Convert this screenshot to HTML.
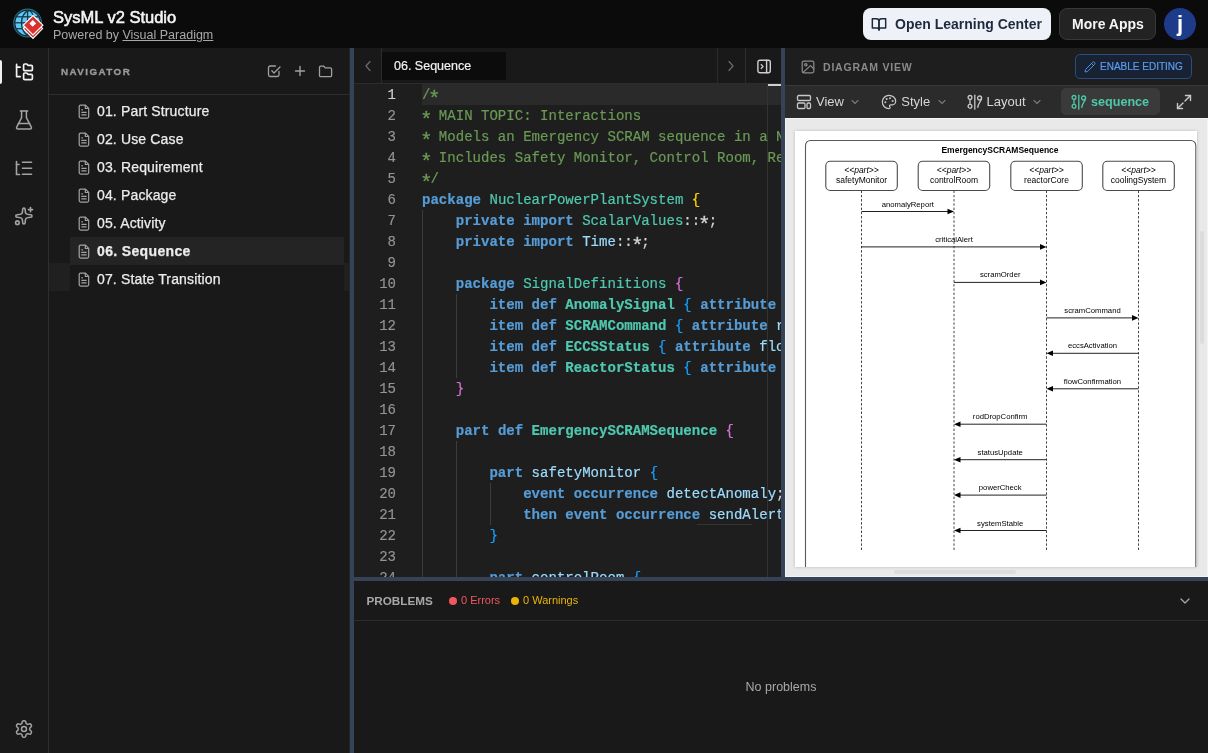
<!DOCTYPE html>
<html><head><meta charset="utf-8">
<style>
*{box-sizing:border-box;margin:0;padding:0}
html,body{width:1208px;height:753px;overflow:hidden;background:#1a1a1a;font-family:"Liberation Sans",sans-serif;color:#e5e5e5}
.abs{position:absolute}
#hdr{left:0;top:0;width:1208px;height:48px;background:#0b0b0b}
#act{left:0;top:48px;width:49px;height:705px;background:#191919;border-right:1px solid #2e2e2e}
#nav{left:49px;top:48px;width:301px;height:705px;background:#191919}
.split-v{background:#364256}
#editor{left:354px;top:48px;width:427px;height:529px;background:#1e1e1e;overflow:hidden}
#diag{left:785px;top:48px;width:423px;height:529px;background:#1c1c1c;overflow:hidden}
#prob{left:354px;top:581px;width:854px;height:172px;background:#191919}
.mono{font-family:"Liberation Mono",monospace}

.gutter{left:0;top:0;width:42px;height:529px}
.num{position:absolute;left:0;width:42px;text-align:right;height:21px;line-height:21px;padding-top:0.5px;font-size:14px;color:#949494;-webkit-text-stroke:0.15px currentColor}
.num.cur{color:#d0d0d0}
.code{left:68px;top:0;width:359px;height:529px;overflow:hidden}
.ln{position:absolute;left:0;height:21px;line-height:21px;padding-top:0.5px;font-size:14.05px;white-space:pre;color:#d4d4d4;-webkit-text-stroke:0.2px currentColor}
.k{color:#569cd6;font-weight:bold}
.t{color:#4ec9b0}
b.t{font-weight:bold}
.v{color:#9cdcfe}
.p{color:#d4d4d4}
.c{color:#6a9955}
.ast{font-style:normal;display:inline-block;transform:translateY(4px) scale(1.5)}
.b1{color:#ffd700}
.b2{color:#da70d6}
.b3{color:#179fff}
</style></head><body><div id="root" style="position:absolute;left:0;top:0;width:1208px;height:753px;overflow:hidden;will-change:transform">

<!-- HEADER -->
<div id="hdr" class="abs">
  <svg class="abs" style="left:0;top:0" width="50" height="48" viewBox="0 0 50 48">
    <circle cx="27.6" cy="23" r="13.9" fill="#0d2a36" stroke="#2a6a82" stroke-width="1.1"/>
    <circle cx="27.6" cy="23" r="12.2" fill="#5ec8f2"/>
    <g stroke="#15384a" stroke-width="1.3" fill="none">
      <path d="M29 10.5 C19 13 19 33 29 35.5"/>
      <path d="M27.6 10 V36"/>
      <path d="M15.5 16.8 H40"/>
      <path d="M15 22.8 H40"/>
      <path d="M15.5 28.7 H40"/>
      <path d="M29 10.5 C36 13 36 33 29 35.5"/>
    </g>
    <path d="M33 19 L42.6 28.6 L33 38.4 L23.4 28.6 Z" fill="#d8322f" stroke="#fff" stroke-width="1.1" stroke-linejoin="miter"/>
    <path d="M33 15.5 L42.9 25.2 L33 35 L23.3 25.2 Z" fill="#d8322f" stroke="#fff" stroke-width="1.1" stroke-linejoin="miter"/>
    <path d="M32.8 20 L36.2 23.4 L32.8 26.8 L29.4 23.4 Z" fill="#fff"/><path d="M35 24.6 L36.4 26 L35 27.4 L33.6 26 Z" fill="#d8322f"/>
  </svg>
  <div class="abs" style="left:53px;top:8.3px;font-size:16.5px;font-weight:normal;-webkit-text-stroke:0.55px #f5f5f5;color:#f5f5f5;white-space:nowrap">SysML v2 Studio</div>
  <div class="abs" style="left:53px;top:28px;font-size:12.5px;color:#a8a8a8;white-space:nowrap">Powered by <span style="text-decoration:underline">Visual Paradigm</span></div>

  <div class="abs" style="left:863px;top:8px;width:188px;height:32px;background:#eef2f8;border-radius:8px"></div>
  <svg class="abs" style="left:871px;top:16px" width="16" height="16" viewBox="0 0 24 24" fill="none" stroke="#1e293b" stroke-width="2.2" stroke-linecap="round" stroke-linejoin="round"><path d="M2 4h6a4 4 0 0 1 4 4v13a3 3 0 0 0-3-3H2z"/><path d="M22 4h-6a4 4 0 0 0-4 4v13a3 3 0 0 1 3-3h7z"/></svg>
  <div class="abs" style="left:895px;top:16px;font-size:14px;font-weight:bold;color:#1e293b;white-space:nowrap">Open Learning Center</div>

  <div class="abs" style="left:1059px;top:8px;width:97px;height:32px;background:#232323;border:1px solid #383838;border-radius:8px"></div>
  <div class="abs" style="left:1072px;top:16px;font-size:14px;font-weight:bold;color:#f5f5f5;white-space:nowrap">More Apps</div>

  <div class="abs" style="left:1164px;top:8px;width:32px;height:32px;border-radius:50%;background:#1e3a8a"></div>
  <div class="abs" style="left:1164px;top:11px;width:32px;text-align:center;font-size:22px;font-weight:bold;color:#fff">j</div>
</div>

<!-- ACTIVITY BAR -->
<div id="act" class="abs">
  <div class="abs" style="left:0;top:12px;width:2px;height:24px;background:#f0f0f0;border-radius:0 2px 2px 0"></div>
  <svg class="abs" style="left:14px;top:14px" width="20" height="20" viewBox="0 0 20 20" fill="none" stroke="#f2f2f2" stroke-width="1.7" stroke-linecap="round" stroke-linejoin="round">
    <path d="M2.6 2.4v12.2h3.6"/><path d="M2.6 5.2h3.4"/>
    <path d="M9.6 3.2a1.2 1.2 0 0 1 1.2-1.2h2l1.1 1.3h3.3a1.2 1.2 0 0 1 1.2 1.2v3a1.2 1.2 0 0 1-1.2 1.2h-6.4a1.2 1.2 0 0 1-1.2-1.2z"/>
    <path d="M9.6 12.2a1.2 1.2 0 0 1 1.2-1.2h2l1.1 1.3h3.3a1.2 1.2 0 0 1 1.2 1.2v3a1.2 1.2 0 0 1-1.2 1.2h-6.4a1.2 1.2 0 0 1-1.2-1.2z"/>
  </svg>
  <svg class="abs" style="left:14px;top:60.5px" width="20" height="22" viewBox="0 0 20 22" fill="none" stroke="#a3a3a3" stroke-width="1.5" stroke-linecap="round" stroke-linejoin="round">
    <path d="M6.3 2h7.4"/><path d="M7.6 2v6.6L2.6 18.4a1.2 1.2 0 0 0 1.1 1.6h12.6a1.2 1.2 0 0 0 1.1-1.6L12.4 8.6V2"/><path d="M4.4 14.6h11.2"/>
  </svg>
  <svg class="abs" style="left:14px;top:111px" width="20" height="20" viewBox="0 0 20 20" fill="none" stroke="#a3a3a3" stroke-width="1.6" stroke-linecap="round">
    <path d="M2.5 2.5v13h3"/><path d="M2.5 5.5h2.5"/><path d="M8.5 3.2h9"/><path d="M8.5 9.2h9"/><path d="M8.5 15.2h9"/>
  </svg>
  <svg class="abs" style="left:13px;top:157px" width="22" height="22" viewBox="0 0 22 22" fill="none" stroke="#a3a3a3" stroke-width="1.6" stroke-linecap="round" stroke-linejoin="round">
    <path d="M9.7 4.2 A1.2 1.2 0 0 1 12.1 4.2 C12.3 9.2 12.7 9.6 17.8 9.8 A1.2 1.2 0 0 1 17.8 12.2 C12.7 12.4 12.3 12.8 12.1 17.8 A1.2 1.2 0 0 1 9.7 17.8 C9.5 12.8 9.1 12.4 4 12.2 A1.2 1.2 0 0 1 4 9.8 C9.1 9.6 9.5 9.2 9.7 4.2Z"/>
    <path d="M17.5 2.5v4.2"/><path d="M15.4 4.6h4.2"/>
    <circle cx="4.4" cy="17.7" r="1.8"/>
  </svg>
  <svg class="abs" style="left:14px;top:671px" width="20" height="20" viewBox="0 0 24 24" fill="none" stroke="#a3a3a3" stroke-width="1.8" stroke-linecap="round" stroke-linejoin="round">
    <path d="M12.22 2h-.44a2 2 0 0 0-2 2v.18a2 2 0 0 1-1 1.73l-.43.25a2 2 0 0 1-2 0l-.15-.08a2 2 0 0 0-2.73.73l-.22.38a2 2 0 0 0 .73 2.73l.15.1a2 2 0 0 1 1 1.72v.51a2 2 0 0 1-1 1.74l-.15.09a2 2 0 0 0-.73 2.73l.22.38a2 2 0 0 0 2.73.73l.15-.08a2 2 0 0 1 2 0l.43.25a2 2 0 0 1 1 1.73V20a2 2 0 0 0 2 2h.44a2 2 0 0 0 2-2v-.18a2 2 0 0 1 1-1.73l.43-.25a2 2 0 0 1 2 0l.15.08a2 2 0 0 0 2.73-.73l.22-.39a2 2 0 0 0-.73-2.73l-.15-.08a2 2 0 0 1-1-1.74v-.5a2 2 0 0 1 1-1.74l.15-.09a2 2 0 0 0 .73-2.73l-.22-.38a2 2 0 0 0-2.73-.73l-.15.08a2 2 0 0 1-2 0l-.43-.25a2 2 0 0 1-1-1.73V4a2 2 0 0 0-2-2z"/><circle cx="12" cy="12" r="3"/>
  </svg>
</div>

<!-- NAVIGATOR -->
<div id="nav" class="abs">
  <div class="abs" style="left:0;top:215px;width:21px;height:28px;background:#202020"></div><div class="abs" style="left:295px;top:215px;width:6px;height:28px;background:#202020"></div>
  <div class="abs" style="left:12px;top:18.3px;font-size:9.8px;font-weight:bold;letter-spacing:1.45px;color:#9a9a9a;-webkit-text-stroke:0.3px #9a9a9a">NAVIGATOR</div>
  <svg class="abs" style="left:218px;top:16px" width="14" height="14" viewBox="0 0 14 14" fill="none" stroke="#a0a0a0" stroke-width="1.3" stroke-linecap="round" stroke-linejoin="round"><path d="M12 7.5v3.3a1.7 1.7 0 0 1-1.7 1.7H3.2a1.7 1.7 0 0 1-1.7-1.7V3.7A1.7 1.7 0 0 1 3.2 2h5.3"/><path d="M4.8 6.8l2.2 2.2 6-6"/></svg>
  <svg class="abs" style="left:245px;top:17px" width="12" height="12" viewBox="0 0 12 12" fill="none" stroke="#a0a0a0" stroke-width="1.4" stroke-linecap="round"><path d="M6 1.5v9M1.5 6h9"/></svg>
  <svg class="abs" style="left:269px;top:17px" width="15" height="13" viewBox="0 0 15 13" fill="none" stroke="#a0a0a0" stroke-width="1.3" stroke-linejoin="round"><path d="M1.5 2.5a1.3 1.3 0 0 1 1.3-1.3h3l1.5 1.7h5a1.3 1.3 0 0 1 1.3 1.3v6.2a1.3 1.3 0 0 1-1.3 1.3H2.8a1.3 1.3 0 0 1-1.3-1.3z"/></svg>
  <div class="abs" style="left:0;top:46px;width:301px;height:1px;background:#2e2e2e"></div>
<div class="abs" style="left:21px;top:49px;width:275px;height:28px"><svg class="abs" style="left:8px;top:7px" width="12" height="15" viewBox="0 0 12 15" fill="none" stroke="#a3a3a3" stroke-width="1.2" stroke-linejoin="round"><path d="M1.2 2.6a1.5 1.5 0 0 1 1.5-1.5h4.8l3.2 3.2v8.3a1.5 1.5 0 0 1-1.5 1.5H2.7a1.5 1.5 0 0 1-1.5-1.5z"/><path d="M7.3 1.1v3.4h3.4"/><path d="M3.3 8.3h5.3M3.3 10.8h5.3M3.3 5.8h1.6"/></svg><div class="abs" style="left:27px;top:6px;font-size:14px;letter-spacing:0.15px;white-space:nowrap;color:#ececec;-webkit-text-stroke:0.25px #ececec;">01. Part Structure</div></div>
<div class="abs" style="left:21px;top:77px;width:275px;height:28px"><svg class="abs" style="left:8px;top:7px" width="12" height="15" viewBox="0 0 12 15" fill="none" stroke="#a3a3a3" stroke-width="1.2" stroke-linejoin="round"><path d="M1.2 2.6a1.5 1.5 0 0 1 1.5-1.5h4.8l3.2 3.2v8.3a1.5 1.5 0 0 1-1.5 1.5H2.7a1.5 1.5 0 0 1-1.5-1.5z"/><path d="M7.3 1.1v3.4h3.4"/><path d="M3.3 8.3h5.3M3.3 10.8h5.3M3.3 5.8h1.6"/></svg><div class="abs" style="left:27px;top:6px;font-size:14px;letter-spacing:0.15px;white-space:nowrap;color:#ececec;-webkit-text-stroke:0.25px #ececec;">02. Use Case</div></div>
<div class="abs" style="left:21px;top:105px;width:275px;height:28px"><svg class="abs" style="left:8px;top:7px" width="12" height="15" viewBox="0 0 12 15" fill="none" stroke="#a3a3a3" stroke-width="1.2" stroke-linejoin="round"><path d="M1.2 2.6a1.5 1.5 0 0 1 1.5-1.5h4.8l3.2 3.2v8.3a1.5 1.5 0 0 1-1.5 1.5H2.7a1.5 1.5 0 0 1-1.5-1.5z"/><path d="M7.3 1.1v3.4h3.4"/><path d="M3.3 8.3h5.3M3.3 10.8h5.3M3.3 5.8h1.6"/></svg><div class="abs" style="left:27px;top:6px;font-size:14px;letter-spacing:0.15px;white-space:nowrap;color:#ececec;-webkit-text-stroke:0.25px #ececec;">03. Requirement</div></div>
<div class="abs" style="left:21px;top:133px;width:275px;height:28px"><svg class="abs" style="left:8px;top:7px" width="12" height="15" viewBox="0 0 12 15" fill="none" stroke="#a3a3a3" stroke-width="1.2" stroke-linejoin="round"><path d="M1.2 2.6a1.5 1.5 0 0 1 1.5-1.5h4.8l3.2 3.2v8.3a1.5 1.5 0 0 1-1.5 1.5H2.7a1.5 1.5 0 0 1-1.5-1.5z"/><path d="M7.3 1.1v3.4h3.4"/><path d="M3.3 8.3h5.3M3.3 10.8h5.3M3.3 5.8h1.6"/></svg><div class="abs" style="left:27px;top:6px;font-size:14px;letter-spacing:0.15px;white-space:nowrap;color:#ececec;-webkit-text-stroke:0.25px #ececec;">04. Package</div></div>
<div class="abs" style="left:21px;top:161px;width:275px;height:28px"><svg class="abs" style="left:8px;top:7px" width="12" height="15" viewBox="0 0 12 15" fill="none" stroke="#a3a3a3" stroke-width="1.2" stroke-linejoin="round"><path d="M1.2 2.6a1.5 1.5 0 0 1 1.5-1.5h4.8l3.2 3.2v8.3a1.5 1.5 0 0 1-1.5 1.5H2.7a1.5 1.5 0 0 1-1.5-1.5z"/><path d="M7.3 1.1v3.4h3.4"/><path d="M3.3 8.3h5.3M3.3 10.8h5.3M3.3 5.8h1.6"/></svg><div class="abs" style="left:27px;top:6px;font-size:14px;letter-spacing:0.15px;white-space:nowrap;color:#ececec;-webkit-text-stroke:0.25px #ececec;">05. Activity</div></div>
<div class="abs" style="left:21px;top:189px;width:274px;height:28px;background:#242424"></div><div class="abs" style="left:21px;top:189px;width:275px;height:28px"><svg class="abs" style="left:8px;top:7px" width="12" height="15" viewBox="0 0 12 15" fill="none" stroke="#a3a3a3" stroke-width="1.2" stroke-linejoin="round"><path d="M1.2 2.6a1.5 1.5 0 0 1 1.5-1.5h4.8l3.2 3.2v8.3a1.5 1.5 0 0 1-1.5 1.5H2.7a1.5 1.5 0 0 1-1.5-1.5z"/><path d="M7.3 1.1v3.4h3.4"/><path d="M3.3 8.3h5.3M3.3 10.8h5.3M3.3 5.8h1.6"/></svg><div class="abs" style="left:27px;top:6px;font-size:14px;letter-spacing:0.15px;white-space:nowrap;color:#ececec;-webkit-text-stroke:0.25px #ececec;font-weight:bold;letter-spacing:0.35px">06. Sequence</div></div>
<div class="abs" style="left:21px;top:217px;width:275px;height:28px"><svg class="abs" style="left:8px;top:7px" width="12" height="15" viewBox="0 0 12 15" fill="none" stroke="#a3a3a3" stroke-width="1.2" stroke-linejoin="round"><path d="M1.2 2.6a1.5 1.5 0 0 1 1.5-1.5h4.8l3.2 3.2v8.3a1.5 1.5 0 0 1-1.5 1.5H2.7a1.5 1.5 0 0 1-1.5-1.5z"/><path d="M7.3 1.1v3.4h3.4"/><path d="M3.3 8.3h5.3M3.3 10.8h5.3M3.3 5.8h1.6"/></svg><div class="abs" style="left:27px;top:6px;font-size:14px;letter-spacing:0.15px;white-space:nowrap;color:#ececec;-webkit-text-stroke:0.25px #ececec;">07. State Transition</div></div>
</div>

<!-- SPLITTERS -->
<div class="abs" style="left:349px;top:48px;width:1px;height:705px;background:#262626"></div><div class="abs split-v" style="left:350px;top:48px;width:4px;height:705px"></div>
<div class="abs split-v" style="left:781px;top:48px;width:4px;height:529px"></div>
<div class="abs split-v" style="left:354px;top:577px;width:854px;height:4px"></div>

<!-- EDITOR -->
<div id="editor" class="abs">
  <div class="abs" style="left:0;top:0;width:427px;height:36px;background:#191919;border-bottom:1px solid #2c2c2c"></div>
  <div class="abs" style="left:27px;top:0;width:1px;height:35px;background:#2c2c2c"></div>
  <svg class="abs" style="left:9px;top:12px" width="10" height="12" viewBox="0 0 10 12" fill="none" stroke="#6b6b6b" stroke-width="1.2" stroke-linecap="round" stroke-linejoin="round"><path d="M7 1.5 3 6l4 4.5"/></svg>
  <div class="abs" style="left:28px;top:4px;width:124px;height:27.5px;background:#0c0c0c"></div>
  <div class="abs" style="left:40px;top:10.5px;font-size:12.5px;color:#f2f2f2;-webkit-text-stroke:0.2px #f2f2f2;white-space:nowrap">06. Sequence</div>
  <div class="abs" style="left:363px;top:0;width:1px;height:35px;background:#2c2c2c"></div>
  <div class="abs" style="left:391px;top:0;width:1px;height:35px;background:#2c2c2c"></div>
  <svg class="abs" style="left:372px;top:12px" width="10" height="12" viewBox="0 0 10 12" fill="none" stroke="#6b6b6b" stroke-width="1.2" stroke-linecap="round" stroke-linejoin="round"><path d="M3 1.5 7 6l-4 4.5"/></svg>
  <svg class="abs" style="left:403px;top:10.5px" width="15" height="15" viewBox="0 0 15 15" fill="none" stroke="#cfcfcf" stroke-width="1.4" stroke-linecap="round" stroke-linejoin="round"><rect x="0.9" y="1.2" width="12.4" height="12.6" rx="2"/><path d="M9.6 1.2v12.6"/><path d="M4.3 5.6 6 7.5 4.3 9.4"/></svg>
  <div class="abs" style="left:68px;top:36px;width:359px;height:21px;background:#2a2a2a"></div>
  <div class="abs" style="left:413px;top:36px;width:1px;height:493px;background:#333"></div>
  <div class="abs" style="left:414px;top:36px;width:13px;height:2px;background:#d0d0d0"></div>
  <div class="abs" style="left:343px;top:476px;width:55px;height:1px;background:#343434"></div>
  <div class="abs" style="left:68px;top:162px;width:1px;height:378px;background:#3c3c3c"></div><div class="abs" style="left:102px;top:246px;width:1px;height:84px;background:#3c3c3c"></div><div class="abs" style="left:102px;top:393px;width:1px;height:147px;background:#3c3c3c"></div><div class="abs" style="left:136px;top:435px;width:1px;height:42px;background:#3c3c3c"></div>
  <div class="abs mono gutter"><div class="num cur" style="top:36px">1</div>
<div class="num" style="top:57px">2</div>
<div class="num" style="top:78px">3</div>
<div class="num" style="top:99px">4</div>
<div class="num" style="top:120px">5</div>
<div class="num" style="top:141px">6</div>
<div class="num" style="top:162px">7</div>
<div class="num" style="top:183px">8</div>
<div class="num" style="top:204px">9</div>
<div class="num" style="top:225px">10</div>
<div class="num" style="top:246px">11</div>
<div class="num" style="top:267px">12</div>
<div class="num" style="top:288px">13</div>
<div class="num" style="top:309px">14</div>
<div class="num" style="top:330px">15</div>
<div class="num" style="top:351px">16</div>
<div class="num" style="top:372px">17</div>
<div class="num" style="top:393px">18</div>
<div class="num" style="top:414px">19</div>
<div class="num" style="top:435px">20</div>
<div class="num" style="top:456px">21</div>
<div class="num" style="top:477px">22</div>
<div class="num" style="top:498px">23</div>
<div class="num" style="top:519px">24</div>
</div>
  <div class="abs mono code"><div class="ln" style="top:36px"><span class="c">/<i class="ast">*</i></span></div>
<div class="ln" style="top:57px"><span class="c"><i class="ast">*</i> MAIN TOPIC: Interactions</span></div>
<div class="ln" style="top:78px"><span class="c"><i class="ast">*</i> Models an Emergency SCRAM sequence in a Nuclear Power Plant</span></div>
<div class="ln" style="top:99px"><span class="c"><i class="ast">*</i> Includes Safety Monitor, Control Room, Reactor Core, Cooling System</span></div>
<div class="ln" style="top:120px"><span class="c"><i class="ast">*</i>/</span></div>
<div class="ln" style="top:141px"><b class="k">package</b> <span class="t">NuclearPowerPlantSystem</span> <span class="b1">{</span></div>
<div class="ln" style="top:162px">    <b class="k">private</b> <b class="k">import</b> <span class="t">ScalarValues</span><span class="p">::<i class="ast">*</i>;</span></div>
<div class="ln" style="top:183px">    <b class="k">private</b> <b class="k">import</b> <span class="v">Time</span><span class="p">::<i class="ast">*</i>;</span></div>
<div class="ln" style="top:204px"></div>
<div class="ln" style="top:225px">    <b class="k">package</b> <span class="t">SignalDefinitions</span> <span class="b2">{</span></div>
<div class="ln" style="top:246px">        <b class="k">item</b> <b class="k">def</b> <b class="t">AnomalySignal</b> <span class="b3">{</span> <b class="k">attribute</b> <span class="v">severity</span></div>
<div class="ln" style="top:267px">        <b class="k">item</b> <b class="k">def</b> <b class="t">SCRAMCommand</b> <span class="b3">{</span> <b class="k">attribute</b> <span class="v">reason</span></div>
<div class="ln" style="top:288px">        <b class="k">item</b> <b class="k">def</b> <b class="t">ECCSStatus</b> <span class="b3">{</span> <b class="k">attribute</b> <span class="v">flowRate</span></div>
<div class="ln" style="top:309px">        <b class="k">item</b> <b class="k">def</b> <b class="t">ReactorStatus</b> <span class="b3">{</span> <b class="k">attribute</b> <span class="v">status</span></div>
<div class="ln" style="top:330px">    <span class="b2">}</span></div>
<div class="ln" style="top:351px"></div>
<div class="ln" style="top:372px">    <b class="k">part</b> <b class="k">def</b> <b class="t">EmergencySCRAMSequence</b> <span class="b2">{</span></div>
<div class="ln" style="top:393px"></div>
<div class="ln" style="top:414px">        <b class="k">part</b> <span class="v">safetyMonitor</span> <span class="b3">{</span></div>
<div class="ln" style="top:435px">            <b class="k">event</b> <b class="k">occurrence</b> <span class="v">detectAnomaly</span><span class="p">;</span></div>
<div class="ln" style="top:456px">            <b class="k">then</b> <b class="k">event</b> <b class="k">occurrence</b> <span class="v">sendAlert</span><span class="p">;</span></div>
<div class="ln" style="top:477px">        <span class="b3">}</span></div>
<div class="ln" style="top:498px"></div>
<div class="ln" style="top:519px">        <b class="k">part</b> <span class="v">controlRoom</span> <span class="b3">{</span></div>
</div>
</div>

<!-- DIAGRAM -->
<div id="diag" class="abs">
  <div class="abs" style="left:0;top:0;width:423px;height:37px;background:#1e1e1e"></div>
  <svg class="abs" style="left:16px;top:12px" width="14" height="14" viewBox="0 0 14 14" fill="none" stroke="#8c8c8c" stroke-width="1.2" stroke-linecap="round" stroke-linejoin="round"><rect x="1.2" y="1.2" width="11.6" height="11.6" rx="1.5"/><circle cx="4.8" cy="4.8" r="1.2"/><path d="M12.8 8.8 9.5 5.6 1.8 12.6"/></svg>
  <div class="abs" style="left:38px;top:12.5px;font-size:10.5px;font-weight:bold;letter-spacing:0.8px;color:#8a8a8a;white-space:nowrap">DIAGRAM VIEW</div>
  <div class="abs" style="left:290px;top:6px;width:117px;height:25px;border:1px solid #2b4c7c;background:#182233;border-radius:5px"></div>
  <svg class="abs" style="left:299px;top:12.5px" width="12" height="12" viewBox="0 0 24 24" fill="none" stroke="#5a9cf0" stroke-width="1.8" stroke-linecap="round" stroke-linejoin="round"><path d="M21.2 6.8a2.8 2.8 0 0 0-4-4L3.8 16.2a2 2 0 0 0-.5.8l-1.3 4.4a.5.5 0 0 0 .6.6l4.4-1.3a2 2 0 0 0 .8-.5z"/><path d="m15 5 4 4"/></svg>
  <div class="abs" style="left:315px;top:12.5px;font-size:10px;color:#5a9cf0;-webkit-text-stroke:0.2px #5a9cf0;white-space:nowrap">ENABLE EDITING</div>
  <div class="abs" style="left:0;top:37px;width:423px;height:33px;background:#2b2b2b;border-top:1px solid #38383c"></div>
  <svg class="abs" style="left:11px;top:46px" width="16" height="16" viewBox="0 0 16 16" fill="none" stroke="#c8c8c8" stroke-width="1.3" stroke-linejoin="round"><rect x="1.5" y="1.5" width="13" height="5" rx="1.2"/><rect x="1.5" y="9" width="7.5" height="5.5" rx="1.2"/><rect x="11" y="9" width="3.5" height="5.5" rx="1.2"/></svg>
  <div class="abs" style="left:31px;top:46px;font-size:13px;color:#d6d6d6;white-space:nowrap">View</div>
  <svg class="abs" style="left:66px;top:51px" width="8" height="6" viewBox="0 0 8 6" fill="none" stroke="#7a7a7a" stroke-width="1.1" stroke-linecap="round"><path d="M1 1.5 4 4.5 7 1.5"/></svg>
  <svg class="abs" style="left:96px;top:46px" width="16" height="16" viewBox="0 0 24 24" fill="none" stroke="#c8c8c8" stroke-width="1.8" stroke-linecap="round" stroke-linejoin="round"><circle cx="13.5" cy="6.5" r=".6" fill="#c8c8c8"/><circle cx="17.5" cy="10.5" r=".6" fill="#c8c8c8"/><circle cx="8.5" cy="7.5" r=".6" fill="#c8c8c8"/><circle cx="6.5" cy="12.5" r=".6" fill="#c8c8c8"/><path d="M12 2C6.5 2 2 6.5 2 12s4.5 10 10 10c.93 0 1.65-.75 1.65-1.69 0-.44-.18-.84-.44-1.13-.3-.3-.44-.7-.44-1.13a1.64 1.64 0 0 1 1.67-1.67h2c3.05 0 5.55-2.5 5.55-5.55C21.97 6.01 17.46 2 12 2z"/></svg>
  <div class="abs" style="left:116.3px;top:46px;font-size:13px;color:#d6d6d6;white-space:nowrap">Style</div>
  <svg class="abs" style="left:153px;top:51px" width="8" height="6" viewBox="0 0 8 6" fill="none" stroke="#7a7a7a" stroke-width="1.1" stroke-linecap="round"><path d="M1 1.5 4 4.5 7 1.5"/></svg>
  <svg class="abs" style="left:182px;top:46px" width="16" height="16" viewBox="0 0 16 16" fill="none" stroke="#c8c8c8" stroke-width="1.3" stroke-linecap="round"><circle cx="3" cy="3.4" r="1.9"/><circle cx="3" cy="12.2" r="1.9"/><path d="M3 5.3v5"/><path d="M7.8 1.2v14"/><circle cx="12.6" cy="4" r="2"/><path d="M14.4 4.6c-.3 3-3.4 4.6-3.6 8.8"/></svg>
  <div class="abs" style="left:201.5px;top:46px;font-size:13px;color:#d6d6d6;white-space:nowrap">Layout</div>
  <svg class="abs" style="left:248px;top:51px" width="8" height="6" viewBox="0 0 8 6" fill="none" stroke="#7a7a7a" stroke-width="1.1" stroke-linecap="round"><path d="M1 1.5 4 4.5 7 1.5"/></svg>
  <div class="abs" style="left:276px;top:40px;width:99px;height:27px;background:#3a3a3a;border-radius:5px"></div>
  <svg class="abs" style="left:285.5px;top:46px" width="16" height="16" viewBox="0 0 16 16" fill="none" stroke="#4ec9a8" stroke-width="1.3" stroke-linecap="round"><circle cx="3" cy="3.4" r="1.9"/><circle cx="3" cy="12.2" r="1.9"/><path d="M3 5.3v5"/><path d="M7.8 1.2v14"/><circle cx="12.6" cy="4" r="2"/><path d="M14.4 4.6c-.3 3-3.4 4.6-3.6 8.8"/></svg>
  <div class="abs" style="left:306px;top:46.7px;font-size:12.6px;font-weight:bold;color:#4ec9a8;white-space:nowrap">sequence</div>
  <svg class="abs" style="left:391px;top:46px" width="16" height="16" viewBox="0 0 16 16" fill="none" stroke="#c8c8c8" stroke-width="1.4" stroke-linecap="round" stroke-linejoin="round"><path d="M9.5 1.5h5v5"/><path d="M14.5 1.5 9 7"/><path d="M6.5 14.5h-5v-5"/><path d="M1.5 14.5 7 9"/></svg>
  <div class="abs" style="left:0;top:70px;width:423px;height:459px;background:#e9e9e9;overflow:hidden">
    <div class="abs" style="left:10px;top:13px;width:402px;height:436px;background:#fff;box-shadow:0 0 3px rgba(0,0,0,0.2)"></div><svg class="abs" style="left:0;top:0" width="423" height="459" viewBox="0 0 423 459" font-family="Liberation Sans, sans-serif"><path d="M20.5 449.0 V27.5 A5 5 0 0 1 25.5 22.5 H405.8 A5 5 0 0 1 410.8 27.5 V449.0" fill="none" stroke="#5a5a5a" stroke-width="1.1"/><text x="215.0" y="35.0" font-size="8.5" font-weight="bold" text-anchor="middle" fill="#000">EmergencySCRAMSequence</text><rect x="40.8" y="43.2" width="71.5" height="29.3" rx="4.5" fill="#fff" stroke="#4a4a4a" stroke-width="1.1"/><text x="76.5" y="55.0" font-size="8.5" font-style="italic" text-anchor="middle" fill="#000">&lt;&lt;part&gt;&gt;</text><text x="76.5" y="65.0" font-size="8.5" text-anchor="middle" fill="#000">safetyMonitor</text><line x1="76.5" y1="72.6" x2="76.5" y2="432.0" stroke="#444" stroke-width="1" stroke-dasharray="2.4 1.85"/><rect x="133.2" y="43.2" width="71.5" height="29.3" rx="4.5" fill="#fff" stroke="#4a4a4a" stroke-width="1.1"/><text x="169.0" y="55.0" font-size="8.5" font-style="italic" text-anchor="middle" fill="#000">&lt;&lt;part&gt;&gt;</text><text x="169.0" y="65.0" font-size="8.5" text-anchor="middle" fill="#000">controlRoom</text><line x1="169.0" y1="72.6" x2="169.0" y2="432.0" stroke="#444" stroke-width="1" stroke-dasharray="2.4 1.85"/><rect x="225.8" y="43.2" width="71.5" height="29.3" rx="4.5" fill="#fff" stroke="#4a4a4a" stroke-width="1.1"/><text x="261.5" y="55.0" font-size="8.5" font-style="italic" text-anchor="middle" fill="#000">&lt;&lt;part&gt;&gt;</text><text x="261.5" y="65.0" font-size="8.5" text-anchor="middle" fill="#000">reactorCore</text><line x1="261.5" y1="72.6" x2="261.5" y2="432.0" stroke="#444" stroke-width="1" stroke-dasharray="2.4 1.85"/><rect x="317.8" y="43.2" width="71.5" height="29.3" rx="4.5" fill="#fff" stroke="#4a4a4a" stroke-width="1.1"/><text x="353.5" y="55.0" font-size="8.5" font-style="italic" text-anchor="middle" fill="#000">&lt;&lt;part&gt;&gt;</text><text x="353.5" y="65.0" font-size="8.5" text-anchor="middle" fill="#000">coolingSystem</text><line x1="353.5" y1="72.6" x2="353.5" y2="432.0" stroke="#444" stroke-width="1" stroke-dasharray="2.4 1.85"/><line x1="76.5" y1="93.5" x2="163.0" y2="93.5" stroke="#222" stroke-width="1"/><path d="M169.0 93.5 L162.5 90.7 L162.5 96.3 Z" fill="#000"/><text x="122.8" y="88.5" font-size="7.7" text-anchor="middle" fill="#000">anomalyReport</text><line x1="76.5" y1="128.9" x2="255.5" y2="128.9" stroke="#222" stroke-width="1"/><path d="M261.5 128.9 L255.0 126.1 L255.0 131.8 Z" fill="#000"/><text x="169.0" y="123.9" font-size="7.7" text-anchor="middle" fill="#000">criticalAlert</text><line x1="169.0" y1="164.4" x2="255.5" y2="164.4" stroke="#222" stroke-width="1"/><path d="M261.5 164.4 L255.0 161.6 L255.0 167.2 Z" fill="#000"/><text x="215.2" y="159.4" font-size="7.7" text-anchor="middle" fill="#000">scramOrder</text><line x1="261.5" y1="199.9" x2="347.5" y2="199.9" stroke="#222" stroke-width="1"/><path d="M353.5 199.9 L347.0 197.1 L347.0 202.7 Z" fill="#000"/><text x="307.5" y="194.9" font-size="7.7" text-anchor="middle" fill="#000">scramCommand</text><line x1="353.5" y1="235.3" x2="267.5" y2="235.3" stroke="#222" stroke-width="1"/><path d="M261.5 235.3 L268.0 232.5 L268.0 238.1 Z" fill="#000"/><text x="307.5" y="230.3" font-size="7.7" text-anchor="middle" fill="#000">eccsActivation</text><line x1="353.5" y1="270.8" x2="267.5" y2="270.8" stroke="#222" stroke-width="1"/><path d="M261.5 270.8 L268.0 267.9 L268.0 273.6 Z" fill="#000"/><text x="307.5" y="265.8" font-size="7.7" text-anchor="middle" fill="#000">flowConfirmation</text><line x1="261.5" y1="306.2" x2="175.0" y2="306.2" stroke="#222" stroke-width="1"/><path d="M169.0 306.2 L175.5 303.4 L175.5 309.0 Z" fill="#000"/><text x="215.2" y="301.2" font-size="7.7" text-anchor="middle" fill="#000">rodDropConfirm</text><line x1="261.5" y1="341.7" x2="175.0" y2="341.7" stroke="#222" stroke-width="1"/><path d="M169.0 341.7 L175.5 338.9 L175.5 344.5 Z" fill="#000"/><text x="215.2" y="336.7" font-size="7.7" text-anchor="middle" fill="#000">statusUpdate</text><line x1="261.5" y1="377.1" x2="175.0" y2="377.1" stroke="#222" stroke-width="1"/><path d="M169.0 377.1 L175.5 374.3 L175.5 379.9 Z" fill="#000"/><text x="215.2" y="372.1" font-size="7.7" text-anchor="middle" fill="#000">powerCheck</text><line x1="261.5" y1="412.5" x2="175.0" y2="412.5" stroke="#222" stroke-width="1"/><path d="M169.0 412.5 L175.5 409.8 L175.5 415.3 Z" fill="#000"/><text x="215.2" y="407.5" font-size="7.7" text-anchor="middle" fill="#000">systemStable</text></svg>
    <div class="abs" style="left:109px;top:452px;width:122px;height:4px;background:#dcdcdc;border-radius:2px"></div>
    <div class="abs" style="left:415px;top:113px;width:4px;height:113px;background:#dcdcdc;border-radius:2px"></div>
    <div class="abs" style="left:0;top:0;width:423px;height:459px;border:1px solid #f4f4f4"></div>
  </div>
</div>

<!-- PROBLEMS -->
<div id="prob" class="abs">
  <div class="abs" style="left:12.5px;top:12.5px;font-size:11.7px;font-weight:bold;color:#a8a8a8;white-space:nowrap">PROBLEMS</div>
  <div class="abs" style="left:95px;top:15.5px;width:8px;height:8px;border-radius:50%;background:#f0585e"></div>
  <div class="abs" style="left:107px;top:13px;font-size:11px;color:#f0585e;white-space:nowrap">0 Errors</div>
  <div class="abs" style="left:157px;top:15.5px;width:8px;height:8px;border-radius:50%;background:#eab308"></div>
  <div class="abs" style="left:169px;top:13px;font-size:11px;color:#eab308;white-space:nowrap">0 Warnings</div>
  <svg class="abs" style="left:825px;top:15px" width="12" height="10" viewBox="0 0 12 10" fill="none" stroke="#a8a8a8" stroke-width="1.3" stroke-linecap="round" stroke-linejoin="round"><path d="M2 3 6 7 10 3"/></svg>
  <div class="abs" style="left:0;top:39px;width:854px;height:1px;background:#2c2c2c"></div>
  <div class="abs" style="left:0;top:99px;width:854px;text-align:center;font-size:12.5px;color:#a8a8a8;white-space:nowrap">No problems</div>
</div>

</div></body></html>
